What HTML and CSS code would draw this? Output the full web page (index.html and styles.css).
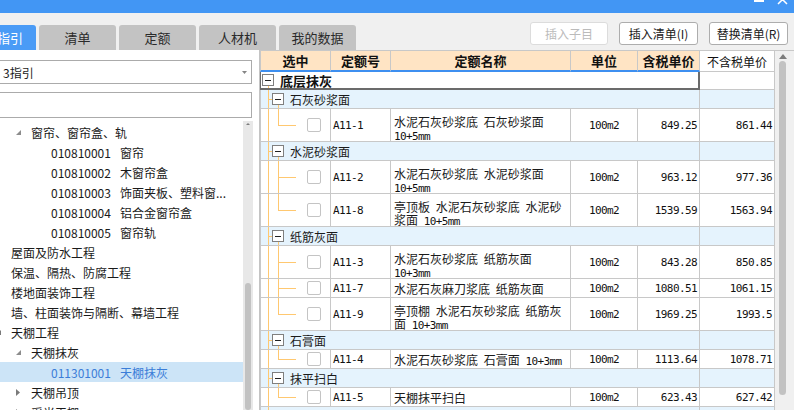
FILE: index.html
```html
<!DOCTYPE html>
<html lang="zh-CN">
<head>
<meta charset="utf-8">
<title>指引</title>
<link rel="stylesheet" href="styles.css">
</head>
<body>
<div class="titlebar">
  <svg width="36" height="13" viewBox="0 0 36 13"><rect x="0" y="0" width="10" height="2" fill="#fff"/><path d="M24 -5 L33 4 M33 -5 L24 4" stroke="#fff" stroke-width="1.5"/></svg>
</div>
<div class="toolbar">
  <div class="tabs">
    <div class="tab active"><span>指引</span></div>
    <div class="tab">清单</div>
    <div class="tab">定额</div>
    <div class="tab">人材机</div>
    <div class="tab">我的数据</div>
  </div>
  <div class="actions">
    <div class="btn disabled">插入子目</div>
    <div class="btn">插入清单(I)</div>
    <div class="btn">替换清单(R)</div>
  </div>
</div>
<div class="main">
  <div class="left">
    <div class="combo"><span>3指引</span><svg width="5" height="3" viewBox="0 0 5 3"><path d="M0 0 L5 0 L2.5 3 Z" fill="#858585"/></svg></div>
    <div class="search"></div>
    <div class="tree">
      <div class="tree-list">
        <div class="node l1"><svg class="ar" width="16" height="20"><path d="M6 8 L6 13 L1 13 Z" fill="#8c8c8c"/></svg><span>窗帘、窗帘盒、轨</span></div>
        <div class="node l2"><span class="ar"></span><span class="code">010810001</span><span>窗帘</span></div>
        <div class="node l2"><span class="ar"></span><span class="code">010810002</span><span>木窗帘盒</span></div>
        <div class="node l2"><span class="ar"></span><span class="code">010810003</span><span>饰面夹板、塑料窗...</span></div>
        <div class="node l2"><span class="ar"></span><span class="code">010810004</span><span>铝合金窗帘盒</span></div>
        <div class="node l2"><span class="ar"></span><span class="code">010810005</span><span>窗帘轨</span></div>
        <div class="node l0"><span class="ar"></span><span>屋面及防水工程</span></div>
        <div class="node l0"><span class="ar"></span><span>保温、隔热、防腐工程</span></div>
        <div class="node l0"><span class="ar"></span><span>楼地面装饰工程</span></div>
        <div class="node l0"><span class="ar"></span><span>墙、柱面装饰与隔断、幕墙工程</span></div>
        <div class="node l0"><svg class="ar" width="16" height="20"><path d="M6 8 L6 13 L1 13 Z" fill="#7a7a7a"/></svg><span>天棚工程</span></div>
        <div class="node l1"><svg class="ar" width="16" height="20"><path d="M6 8 L6 13 L1 13 Z" fill="#8c8c8c"/></svg><span>天棚抹灰</span></div>
        <div class="node l2 sel"><span class="ar"></span><span class="code">011301001</span><span>天棚抹灰</span></div>
        <div class="node l1"><svg class="ar" width="16" height="20"><path d="M1 7 L5 10.5 L1 14 Z" fill="#7a7a7a"/></svg><span>天棚吊顶</span></div>
        <div class="node l1"><svg class="ar" width="16" height="20"><path d="M1 7 L5 10.5 L1 14 Z" fill="#7a7a7a"/></svg><span>采光天棚</span></div>
      </div>
      <div class="tree-sb">
        <svg width="8" height="4" viewBox="0 0 8 4"><path d="M0 4 L4 0 L8 4 Z" fill="#7d7d7d"/></svg>
        <div class="thumb"></div>
      </div>
    </div>
  </div>
  <div class="right">
    <div class="grid">
      <div class="row hd">
        <div class="cell first">选中</div>
        <div class="cell">定额号</div>
        <div class="cell">定额名称</div>
        <div class="cell">单位</div>
        <div class="cell">含税单价</div>
        <div class="cell c6">不含税单价</div>
      </div>
      <div class="row r0">
        <div class="cell span"><span class="box"></span><span class="lbl">底层抹灰</span></div>
        <div class="cell c6"></div>
      </div>

      <div class="row g">
        <div class="cell span first"><span class="box"></span><span class="lbl">石灰砂浆面</span></div>
        <div class="cell c6"></div>
      </div>
      <div class="row d2 last">
        <div class="cell first c1"><span class="chk"></span></div>
        <div class="cell c2 num">A11-1</div>
        <div class="cell c3"><div>水泥石灰砂浆底 石灰砂浆面<br><span class="m">10+5mm</span></div></div>
        <div class="cell c4 num">100m2</div>
        <div class="cell c5 num">849.25</div>
        <div class="cell c6 num">861.44</div>
      </div>

      <div class="row g">
        <div class="cell span first"><span class="box"></span><span class="lbl">水泥砂浆面</span></div>
        <div class="cell c6"></div>
      </div>
      <div class="row d2">
        <div class="cell first c1"><span class="chk"></span></div>
        <div class="cell c2 num">A11-2</div>
        <div class="cell c3"><div>水泥石灰砂浆底 水泥砂浆面<br><span class="m">10+5mm</span></div></div>
        <div class="cell c4 num">100m2</div>
        <div class="cell c5 num">963.12</div>
        <div class="cell c6 num">977.36</div>
      </div>
      <div class="row d2 last">
        <div class="cell first c1"><span class="chk"></span></div>
        <div class="cell c2 num">A11-8</div>
        <div class="cell c3"><div>亭顶板 水泥石灰砂浆底 水泥砂<br>浆面 <span class="m">10+5mm</span></div></div>
        <div class="cell c4 num">100m2</div>
        <div class="cell c5 num">1539.59</div>
        <div class="cell c6 num">1563.94</div>
      </div>

      <div class="row g">
        <div class="cell span first"><span class="box"></span><span class="lbl">纸筋灰面</span></div>
        <div class="cell c6"></div>
      </div>
      <div class="row d2">
        <div class="cell first c1"><span class="chk"></span></div>
        <div class="cell c2 num">A11-3</div>
        <div class="cell c3"><div>水泥石灰砂浆底 纸筋灰面<br><span class="m">10+3mm</span></div></div>
        <div class="cell c4 num">100m2</div>
        <div class="cell c5 num">843.28</div>
        <div class="cell c6 num">850.85</div>
      </div>
      <div class="row d">
        <div class="cell first c1"><span class="chk"></span></div>
        <div class="cell c2 num">A11-7</div>
        <div class="cell c3"><div>水泥石灰麻刀浆底 纸筋灰面</div></div>
        <div class="cell c4 num">100m2</div>
        <div class="cell c5 num">1080.51</div>
        <div class="cell c6 num">1061.15</div>
      </div>
      <div class="row d2 last">
        <div class="cell first c1"><span class="chk"></span></div>
        <div class="cell c2 num">A11-9</div>
        <div class="cell c3"><div>亭顶棚 水泥石灰砂浆底 纸筋灰<br>面 <span class="m">10+3mm</span></div></div>
        <div class="cell c4 num">100m2</div>
        <div class="cell c5 num">1969.25</div>
        <div class="cell c6 num">1993.5</div>
      </div>

      <div class="row g">
        <div class="cell span first"><span class="box"></span><span class="lbl">石膏面</span></div>
        <div class="cell c6"></div>
      </div>
      <div class="row d last">
        <div class="cell first c1"><span class="chk"></span></div>
        <div class="cell c2 num">A11-4</div>
        <div class="cell c3"><div>水泥石灰砂浆底 石膏面 <span class="m">10+3mm</span></div></div>
        <div class="cell c4 num">100m2</div>
        <div class="cell c5 num">1113.64</div>
        <div class="cell c6 num">1078.71</div>
      </div>

      <div class="row g">
        <div class="cell span first"><span class="box"></span><span class="lbl">抹平扫白</span></div>
        <div class="cell c6"></div>
      </div>
      <div class="row d last">
        <div class="cell first c1"><span class="chk"></span></div>
        <div class="cell c2 num">A11-5</div>
        <div class="cell c3"><div>天棚抹平扫白</div></div>
        <div class="cell c4 num">100m2</div>
        <div class="cell c5 num">623.43</div>
        <div class="cell c6 num">627.42</div>
      </div>

      <div class="row g">
        <div class="cell span first"><span class="box"></span></div>
        <div class="cell c6"></div>
      </div>
    </div>
    <div class="vs">
      <svg width="8" height="5" viewBox="0 0 8 5"><path d="M0 5 L4 0 L8 5 Z" fill="#7d7d7d"/></svg>
      <div class="thumb"></div>
    </div>
  </div>
</div>
</body>
</html>
```

FILE: styles.css
```css
* { box-sizing: border-box; }
html, body { margin: 0; padding: 0; }
body {
  width: 794px;
  height: 410px;
  overflow: hidden;
  background: #f0f0f0;
  color: #1a1a1a;
  font-family: "Noto Sans CJK SC", "Noto Sans", sans-serif;
  font-size: 12px;
}

.titlebar {
  height: 13px;
  background: #4296f4;
  display: flex;
  justify-content: flex-end;
  padding-right: 4px;
  overflow: hidden;
}
.titlebar svg { display: block; }

.toolbar {
  height: 37px;
  display: flex;
  justify-content: space-between;
}
.tabs {
  display: flex;
  gap: 3px;
  align-self: flex-end;
}
.tab {
  width: 77px;
  height: 25px;
  background: #c3c3c3;
  border-radius: 3px 3px 0 0;
  display: flex;
  align-items: center;
  justify-content: center;
  font-size: 13px;
  color: #2a2a2a;
}
.tab.active {
  width: 36px;
  background: #4a9bf6;
  color: #fff;
  justify-content: flex-start;
  border-top-left-radius: 0;
}
.tab.active span { margin-left: -3px; }

.actions {
  display: flex;
  gap: 11px;
  margin-top: 9px;
  padding-right: 6px;
  align-self: flex-start;
}
.btn {
  width: 79px;
  height: 23px;
  border: 1px solid #adadad;
  border-radius: 3px;
  background: #fff;
  display: flex;
  align-items: center;
  justify-content: center;
  font-size: 12px;
  color: #1a1a1a;
}
.btn.disabled {
  width: 78px;
  border-color: #dcdcdc;
  color: #bbbbbb;
}

.main {
  display: flex;
  height: 360px;
}

/* left panel */
.left {
  width: 260px;
  flex: none;
  background: #fff;
  border-right: 1px solid #c4c4c4;
  display: flex;
  flex-direction: column;
}
.combo {
  margin: 10px 7px 0 -2px;
  height: 24px;
  border: 1px solid #ababab;
  display: flex;
  align-items: center;
  justify-content: space-between;
  padding: 0 4px;
  font-size: 12px;
}
.search {
  margin: 8px 7px 0 -2px;
  height: 26px;
  border: 1px solid #ababab;
}
.tree {
  margin-top: 3px;
  flex: 1;
  min-height: 0;
  display: flex;
}
.tree-list {
  width: 243px;
  padding-top: 1px;
  overflow: hidden;
}
.tree-sb {
  width: 10px;
  background: #e8e8e8;
  display: flex;
  flex-direction: column;
  align-items: center;
}
.tree-sb svg { margin-top: 2px; display: block; }
.tree-sb .thumb {
  margin-top: 158px;
  width: 6px;
  height: 220px;
  border-radius: 3px;
  background: #c2c2c2;
}
.node {
  height: 20px;
  display: flex;
  align-items: center;
  white-space: nowrap;
  font-size: 12px;
  color: #1a1a1a;
}
.node .ar {
  width: 16px;
  height: 20px;
  flex: none;
  display: block;
}
.l0 .ar { margin-left: -5px; }
.l1 .ar { margin-left: 15px; }
.l2 .ar { margin-left: 35px; }
.node .code { margin-right: 9px; }
.node.sel {
  background: #cce4f7;
  color: #3b7dd8;
}

/* right grid */
.right {
  flex: 1;
  display: flex;
  border-top: 1px solid #c8c8c8;
  background: #fff;
}
.grid {
  width: 515px;
  flex: none;
  overflow: hidden;
}
.row {
  display: grid;
  grid-template-columns: 71px 60px 180px 67px 62px 75px;
}
.cell {
  border-right: 1px solid #c8c8c8;
  border-bottom: 1px solid #c8c8c8;
  display: flex;
  align-items: center;
  overflow: hidden;
  white-space: nowrap;
}
.cell.first { border-left: 1px solid #c8c8c8; }

.hd .cell {
  height: 21px;
  background: #ffe4c4;
  border-bottom: 2px solid #3d8ff0;
  justify-content: center;
  font-weight: bold;
  font-size: 13px;
  color: #111;
}
.hd .cell.c6 {
  background: #fff;
  border-bottom: 1px solid #c8c8c8;
  font-weight: normal;
  font-size: 12px;
}

.r0 { height: 18px; }
.r0 .span {
  grid-column: span 5;
  border-left: 1px solid #6b6b6b;
  border-right: 2px solid #6b6b6b;
  border-bottom: 2px solid #6b6b6b;
  padding-left: 1px;
  background: linear-gradient(#ffc870, #ffc870) 7px 14px / 1px 4px no-repeat;
}
.r0 .lbl {
  margin-left: 6px;
  font-weight: bold;
  font-size: 13px;
  color: #111;
}

.g { height: 19px; }
.g .span {
  grid-column: span 5;
  padding-left: 11px;
  background-color: #e5f3fd;
  background-image:
    linear-gradient(#ffc870, #ffc870),
    linear-gradient(#ffc870, #ffc870),
    linear-gradient(#ffc870, #ffc870);
  background-repeat: no-repeat;
  background-position: 7px 0, 7px 9px, 17px 15px;
  background-size: 1px 100%, 5px 1px, 1px 100%;
}
.g .c6 { background: #e5f3fd; }
.g .lbl { margin-left: 6px; font-size: 12px; }

.box {
  width: 12px;
  height: 12px;
  flex: none;
  border: 1px solid #7f7f7f;
  background: #fff;
  display: flex;
  align-items: center;
  justify-content: center;
}
.box::before {
  content: "";
  width: 6px;
  height: 1px;
  background: #222;
}

.d { height: 19px; }
.d2 { height: 33px; }
.c1 {
  padding-left: 46px;
  background-image:
    linear-gradient(#ffc870, #ffc870),
    linear-gradient(#ffc870, #ffc870),
    linear-gradient(#ffc870, #ffc870);
  background-repeat: no-repeat;
  background-position: 7px 0, 17px 0, 17px 50%;
  background-size: 1px 100%, 1px 100%, 18px 1px;
}
.last .c1 {
  background-size: 1px 100%, 1px calc(50% + 1px), 18px 1px;
}
.chk {
  width: 14px;
  height: 14px;
  border: 1px solid #c4c4c4;
  border-radius: 2px;
  background: #fff;
}
.num, .m {
  font-family: "DejaVu Sans Mono", monospace;
  font-size: 11px;
  letter-spacing: -0.6px;
  color: #111;
}
.c2 { padding-left: 2px; }
.c3 {
  padding-left: 3px;
  word-spacing: 3px;
  font-size: 12px;
}
.d2 .c3 {
  align-items: flex-start;
  padding-top: 6px;
  line-height: 13px;
}
.c4 { justify-content: center; }
.c5, .row .c6.num { justify-content: flex-end; padding-right: 2px; }

/* right scrollbar */
.vs {
  width: 19px;
  flex: none;
  background: #f0f0f0;
  display: flex;
  flex-direction: column;
}
.vs svg { margin: 3px 0 0 4px; display: block; }
.vs .thumb {
  margin: 2px 0 0 4px;
  width: 7px;
  height: 334px;
  border-radius: 4px;
  background: #c2c2c2;
}
```
